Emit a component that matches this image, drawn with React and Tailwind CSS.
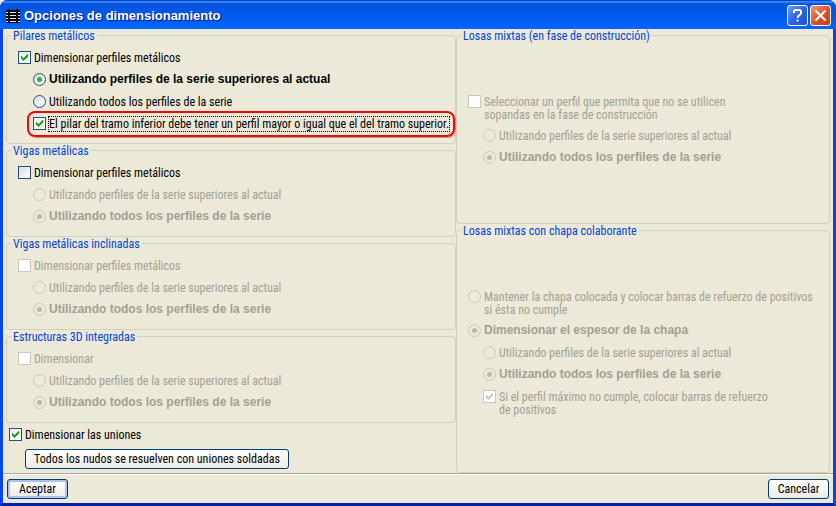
import { useState } from 'react';
import clsx from 'clsx';

const CheckBox = ({ id, checked, disabled, onChange }) => (
    <span className="grid shrink-0">
        <input
            id={id}
            type="checkbox"
            checked={checked}
            disabled={disabled}
            onChange={onChange}
            className="col-start-1 row-start-1 size-[13px] appearance-none border border-[#1c5180] bg-linear-to-br from-[#dcdcd7] to-white checked:from-[#f0f0ec] disabled:border-[#cac8bb] disabled:from-white outline-none"
        />
        {checked && (
            <svg viewBox="0 0 13 13" shapeRendering="crispEdges" className={clsx('pointer-events-none col-start-1 row-start-1 size-[13px]', disabled ? 'fill-[#cac8bb]' : 'fill-[#21a121]')}>
                <path d="M3 5h1v3h-1zM4 6h1v3h-1zM5 7h1v3h-1zM6 6h1v3h-1zM7 5h1v3h-1zM8 4h1v3h-1zM9 3h1v3h-1z" />
            </svg>
        )}
    </span>
);

const Radio = ({ id, name, checked, disabled, onChange }) => (
    <span className="grid shrink-0">
        <input
            id={id}
            type="radio"
            name={name}
            checked={checked}
            disabled={disabled}
            onChange={onChange}
            className="col-start-1 row-start-1 size-[13px] appearance-none rounded-full border border-[#1c5180] bg-linear-to-br from-[#dcdcd7] to-white disabled:border-[#cac8bb] disabled:bg-none outline-none"
        />
        {checked && (
            <span className={clsx('pointer-events-none col-start-1 row-start-1 size-[5px] place-self-center rounded-full', disabled ? 'bg-[#bab8ae]' : 'bg-[#2fb52f]')} />
        )}
    </span>
);

function Option({ id, type = 'radio', label, indent, tall, focused, highlighted, disabled, ...rest }) {
    const Control = type === 'radio' ? Radio : CheckBox;
    const bold = type === 'radio' && rest.checked;

    return (
        <div className={clsx('flex items-start pt-[5px]', tall ? 'h-[34px]' : 'h-[22px]', indent && 'pl-[15px]')}>
            <div className="relative flex items-start gap-[3px]">
                <Control id={id} disabled={disabled} {...rest} />
                <label
                    htmlFor={id}
                    className={clsx(
                        'whitespace-pre',
                        bold ? "font-['Liberation_Sans',Arial,sans-serif] font-bold" : 'pt-px',
                        disabled ? 'text-[#a1a192]' : 'text-black',
                        focused && 'outline-1 outline-dotted outline-black'
                    )}
                >
                    {label}
                </label>
                {highlighted && (
                    <span className="pointer-events-none absolute -inset-x-[6px] -inset-y-[6px] rounded-lg border-2 border-[#f00808] shadow-[1px_1px_1px_#b0a090]" />
                )}
            </div>
        </div>
    );
}

function Group({ title, className, children }) {
    return (
        <fieldset className={clsx('min-w-0 rounded-[4px] border border-[#d0d0bf] px-1', className)}>
            <legend className="px-[2px] pt-px leading-[12px] text-[#0046d5]">{title}</legend>
            <div className="pl-[7px]">{children}</div>
        </fieldset>
    );
}

// The pair of profile choices shared by every group
function ProfileChoice({ name, value, onChange, disabled }) {
    return (
        <>
            <Option id={`${name}-sup`} name={name} indent disabled={disabled} checked={value === 'sup'} onChange={() => onChange('sup')} label="Utilizando perfiles de la serie superiores al actual" />
            <Option id={`${name}-all`} name={name} indent disabled={disabled} checked={value === 'all'} onChange={() => onChange('all')} label="Utilizando todos los perfiles de la serie" />
        </>
    );
}

const Button = ({ primary, className, children }) => (
    <button
        type="button"
        className={clsx(
            'h-5 rounded-[3px] border border-[#003c74] bg-linear-to-b from-white to-[#ecebe5] text-black',
            primary && 'shadow-[inset_0_0_0_2px_#a9c2f0]',
            className
        )}
    >
        {children}
    </button>
);

export default function App() {
    const [state, setState] = useState({
        pillars: true,
        pillarsMode: 'sup',
        lower: true,
        beams: false,
        beamsMode: 'all',
        joints: true
    });
    const set = (key, value) => setState(prev => ({ ...prev, [key]: value }));
    const toggle = key => () => setState(prev => ({ ...prev, [key]: !prev[key] }));
    const noop = () => {};

    return (
        <div className="bg-[#e4e8f0] font-['Roboto_Condensed','Liberation_Sans',sans-serif] text-[12px] leading-[13px]">
            <div className="overflow-hidden rounded-t-lg bg-[#0831d9]">
                {/* Title bar */}
                <header className="flex h-[29px] items-center gap-1 bg-linear-to-b from-[#0a52d8] via-[#0058e8] to-[#0066ff] pt-[2px] pr-[5px] pl-[6px] shadow-[inset_0_1px_0_#0a3fc0,inset_0_3px_1px_#2a86f8]">
                    <svg viewBox="0 0 14 14" shapeRendering="crispEdges" className="size-[14px]">
                        <path fill="#000" d="M0 1h14v13h-14z" />
                        <path fill="#e8e8e8" d="M0 3h14v1h-14zM0 6h14v1h-14zM0 9h14v1h-14zM0 12h14v1h-14z" />
                        <path fill="#000" d="M2 0h2v14h-2zM10 0h2v14h-2z" />
                    </svg>
                    <h1 className="flex-1 font-['Liberation_Sans',Arial,sans-serif] text-[13px] leading-4 font-bold text-white [text-shadow:1px_1px_1px_#0a1883]">Opciones de dimensionamiento</h1>
                    <div className="flex gap-[2px]">
                        <button type="button" aria-label="Ayuda" className="grid size-[21px] place-items-center rounded-[3px] border border-white bg-linear-to-br from-[#6f9bf5] via-[#2f63e0] to-[#1f4fd0]">
                            <svg viewBox="0 0 19 19" className="size-[19px]" fill="none" stroke="#fff" strokeWidth="2">
                                <path d="M6 7V5.500Q6 4 8 4h3q2 0 2 2v1q0 1-1.500 2T9.500 12M9.500 13.500v2" />
                            </svg>
                        </button>
                        <button type="button" aria-label="Cerrar" className="grid size-[21px] place-items-center rounded-[3px] border border-white bg-linear-to-br from-[#f0927a] via-[#e0512c] to-[#c83c10]">
                            <svg viewBox="0 0 19 19" className="size-[19px]" fill="none" stroke="#fff" strokeWidth="2.200">
                                <path d="M4.500 4.500l10 10M14.500 4.500l-10 10" />
                            </svg>
                        </button>
                    </div>
                </header>

                <div className="border-x-3 border-b-3 border-t-0 border-x-[#0a46e0] border-b-[#0420b0] bg-[#ece9d8]">
                    <main className="grid grid-cols-[minmax(0,450fr)_minmax(0,374fr)] px-[3px]">
                        <div>
                            <Group title="Pilares metálicos" className="pt-1 pb-[9px]">
                                <Option id="pillars" type="checkbox" checked={state.pillars} onChange={toggle('pillars')} label="Dimensionar perfiles metálicos" />
                                <ProfileChoice name="pillars-mode" value={state.pillarsMode} onChange={v => set('pillarsMode', v)} disabled={!state.pillars} />
                                <Option id="lower" type="checkbox" indent focused highlighted checked={state.lower} onChange={toggle('lower')} label="El pilar del tramo inferior debe tener un perfil mayor o igual que el del tramo superior." />
                            </Group>
                            <Group title="Vigas metálicas" className="pt-1 pb-[9px]">
                                <Option id="beams" type="checkbox" checked={state.beams} onChange={toggle('beams')} label="Dimensionar perfiles metálicos" />
                                <ProfileChoice name="beams-mode" value={state.beamsMode} onChange={v => set('beamsMode', v)} disabled={!state.beams} />
                            </Group>
                            <Group title="Vigas metálicas inclinadas" className="pt-1 pb-[9px]">
                                <Option id="sloped" type="checkbox" disabled checked={false} onChange={noop} label="Dimensionar perfiles metálicos" />
                                <ProfileChoice name="sloped-mode" value="all" onChange={noop} disabled />
                            </Group>
                            <Group title="Estructuras 3D integradas" className="pt-1 pb-[9px]">
                                <Option id="struct" type="checkbox" disabled checked={false} onChange={noop} label="Dimensionar" />
                                <ProfileChoice name="struct-mode" value="all" onChange={noop} disabled />
                            </Group>
                            <div className="pb-1 pl-[3px]">
                                <Option id="joints" type="checkbox" checked={state.joints} onChange={toggle('joints')} label="Dimensionar las uniones" />
                                <div className="pt-1 pl-4">
                                    <Button className="px-2">Todos los nudos se resuelven con uniones soldadas</Button>
                                </div>
                            </div>
                        </div>

                        <div className="flex flex-col">
                            <Group title="Losas mixtas (en fase de construcción)" className="pt-12 pb-[55px]">
                                <Option id="slab" type="checkbox" tall disabled checked={false} onChange={noop} label={'Seleccionar un perfil que permita que no se utilicen\nsopandas en la fase de construcción'} />
                                <ProfileChoice name="slab-mode" value="all" onChange={noop} disabled />
                            </Group>
                            <Group title="Losas mixtas con chapa colaborante" className="flex-1 pt-12">
                                <Option id="deck-keep" name="deck" tall disabled checked={false} onChange={noop} label={'Mantener la chapa colocada y colocar barras de refuerzo de positivos\nsi ésta no cumple'} />
                                <Option id="deck-size" name="deck" disabled checked onChange={noop} label="Dimensionar el espesor de la chapa" />
                                <ProfileChoice name="deck-mode" value="all" onChange={noop} disabled />
                                <Option id="deck-bars" type="checkbox" indent tall disabled checked onChange={noop} label={'Si el perfil máximo no cumple, colocar barras de refuerzo\nde positivos'} />
                            </Group>
                        </div>
                    </main>

                    <footer className="flex justify-between border-t border-[#aca899] px-1 pt-[5px] pb-1 shadow-[inset_0_1px_0_#fff]">
                        <Button primary className="w-[61px]">Aceptar</Button>
                        <Button className="w-[61px]">Cancelar</Button>
                    </footer>
                </div>
            </div>
        </div>
    );
}
